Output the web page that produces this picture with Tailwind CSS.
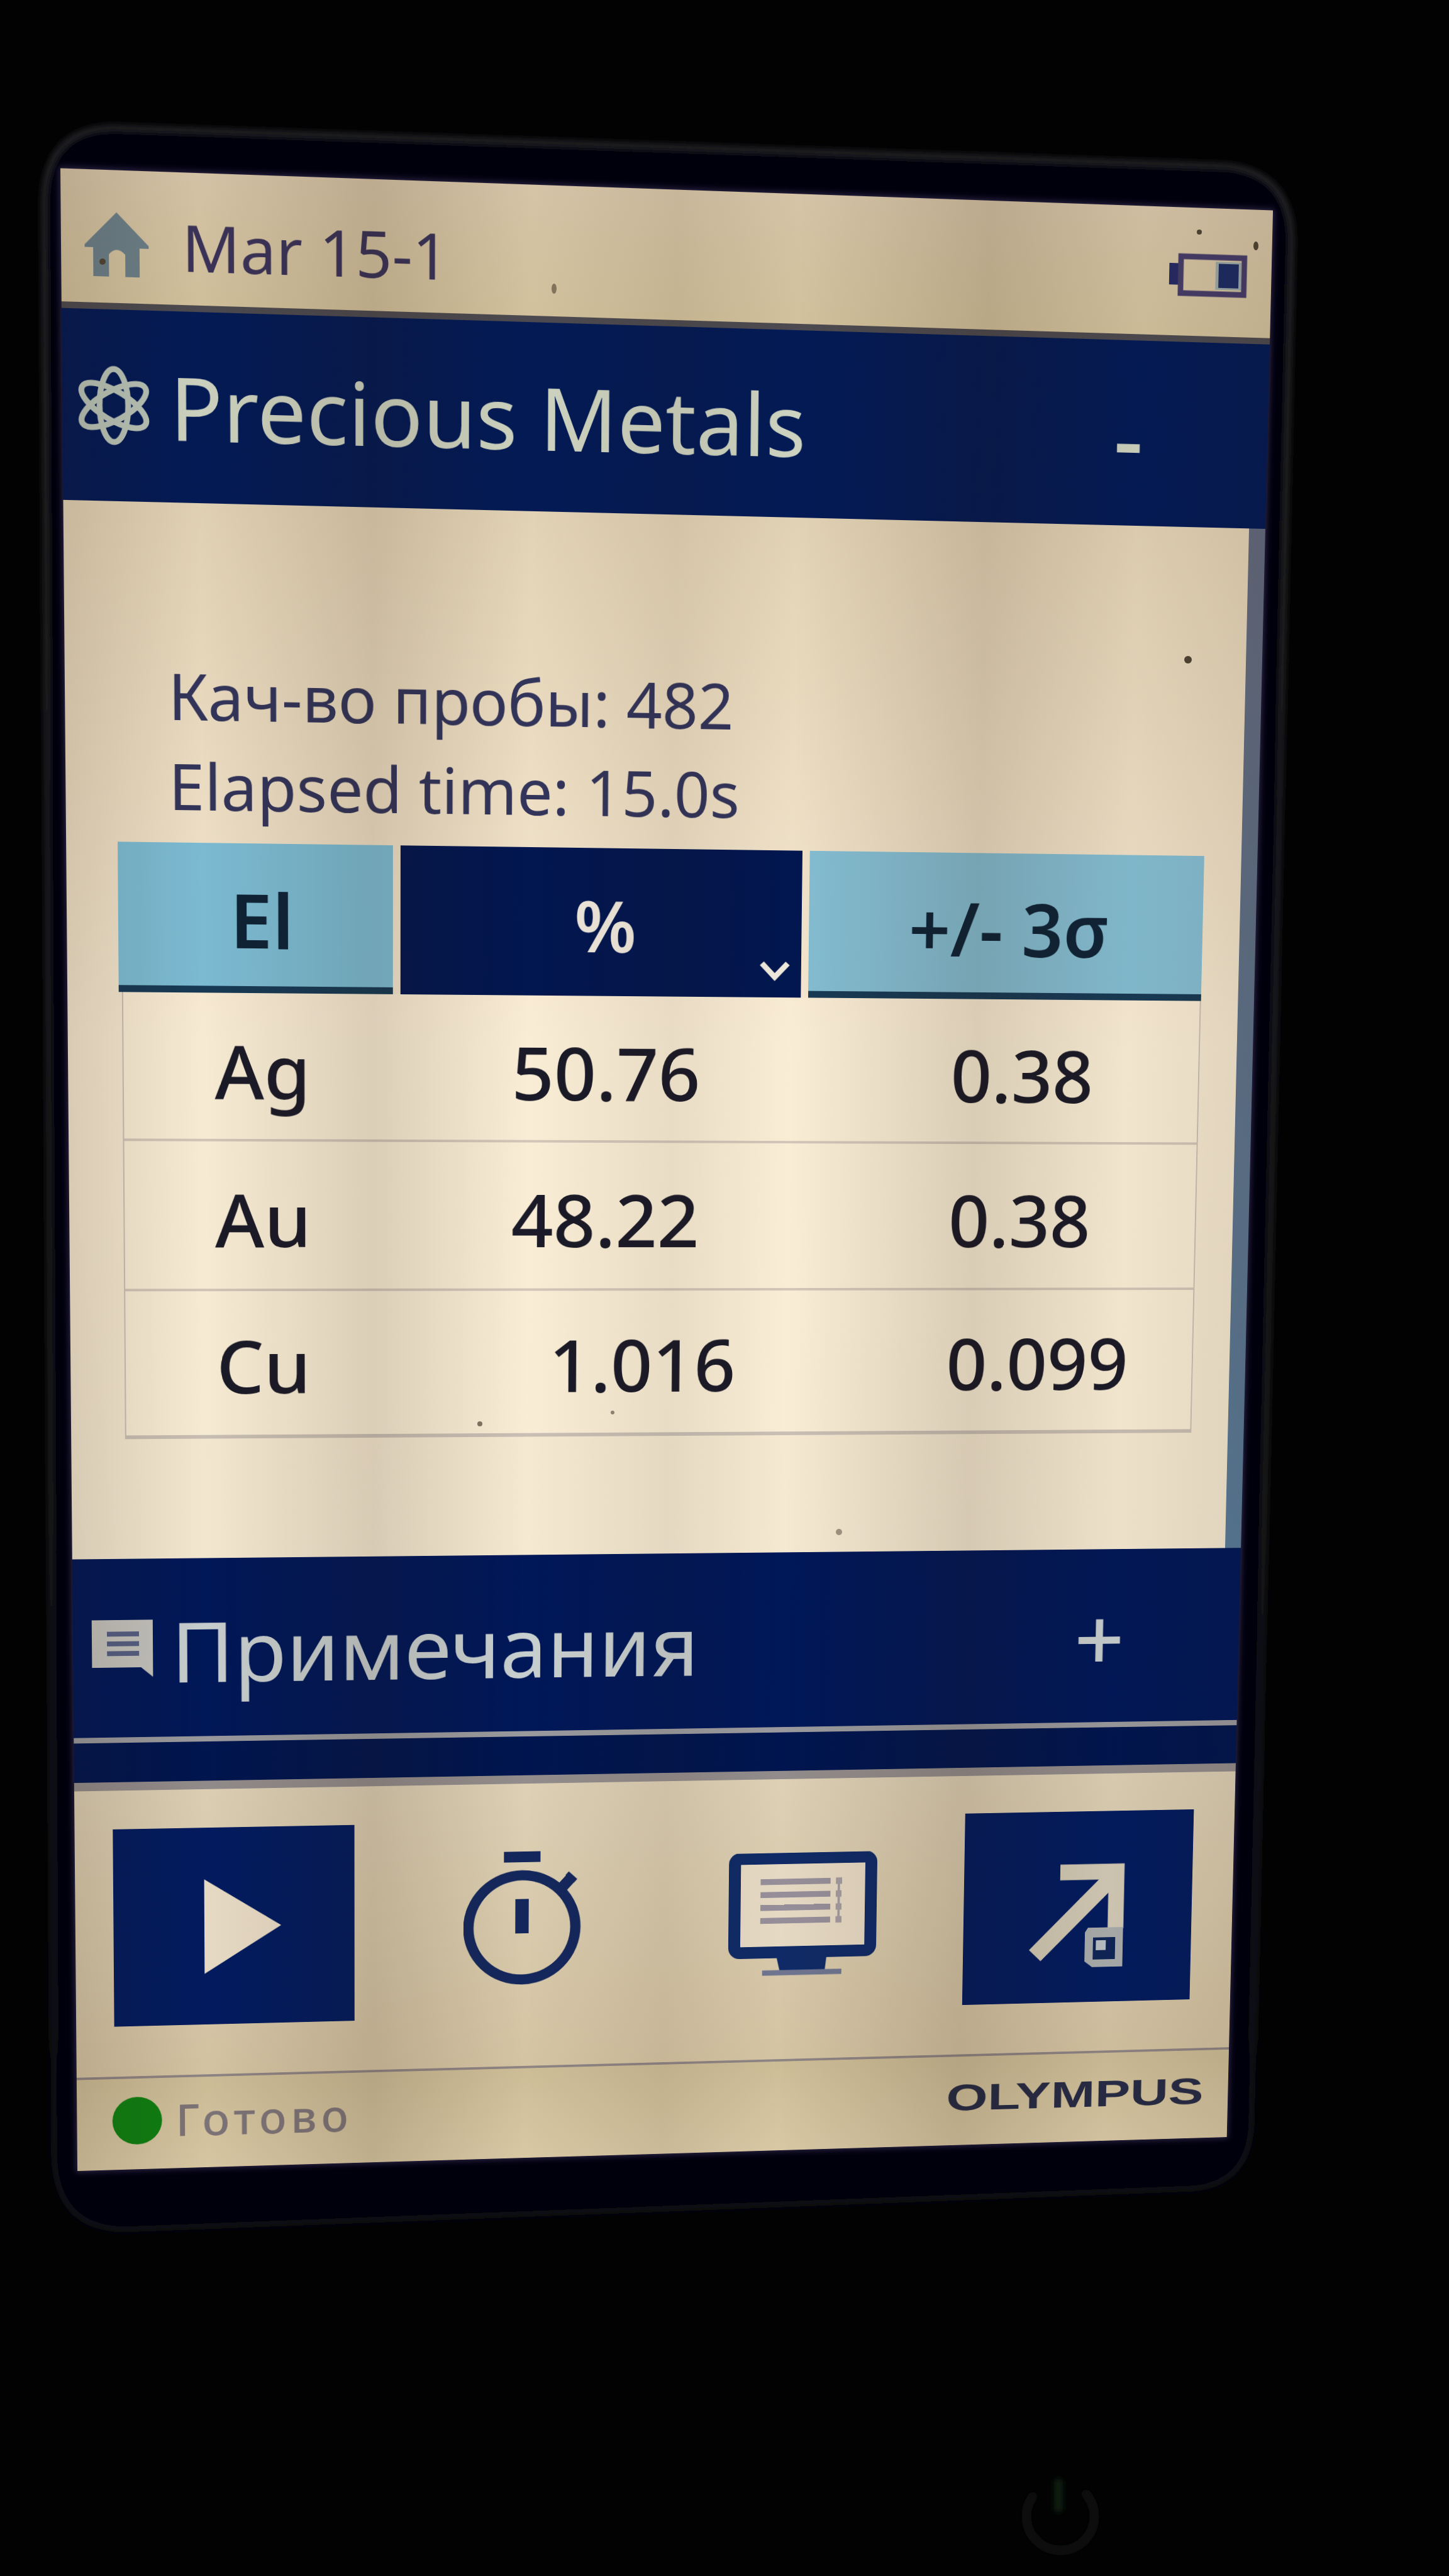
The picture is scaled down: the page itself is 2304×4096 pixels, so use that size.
<!DOCTYPE html>
<html lang="ru">

<head>
  <meta charset="UTF-8" />
  <meta name="viewport" content="width=device-width, initial-scale=1.0" />
  <title>Precious Metals</title>

  <!-- Tailwind CSS -->
  <script src="https://cdn.jsdelivr.net/npm/@tailwindcss/browser@4"></script>
</head>

<body class="relative w-[2304px] h-[4096px] overflow-hidden bg-[#020203] font-['Noto_Sans','Open_Sans',sans-serif]">

  <!-- Device body: bezel rim and power button -->
  <svg class="absolute inset-0" width="2304" height="4096" viewBox="0 0 2304 4096" fill="none">
    <defs>
      <filter id="soft" x="-10%" y="-10%" width="120%" height="120%"><feGaussianBlur stdDeviation="5" /></filter>
      <linearGradient id="rim" x1="0" y1="0" x2="0" y2="1">
        <stop offset="0" stop-color="#242426" />
        <stop offset="0.85" stop-color="#17171a" />
        <stop offset="1" stop-color="#0a0a18" />
      </linearGradient>
    </defs>
    <path d="M70 320 Q72 205 180 203 L1950 264 Q2052 275 2054 380 L1990 3380 Q1985 3470 1900 3480 L200 3545 Q90 3545 86 3430 Z" fill="#050507" stroke="url(#rim)" stroke-width="9" filter="url(#soft)" />
    <g stroke-linecap="round" stroke-width="15" filter="url(#soft)">
      <path d="M1642 3970 A54 54 0 1 0 1727 3966" stroke="#0b110d" />
      <path d="M1683 3948 V3988" stroke="#0a1c10" />
    </g>
  </svg>

  <!-- Screen -->
  <div class="absolute left-0 top-0 w-[1920px] h-[3200px] origin-top-left [transform:matrix3d(1.046897,0.041972,0,0.0000210912,0.010650,1.056250,0,0.0000176944,0,0,1,0,96,267.5,0,1)] flex flex-col overflow-hidden bg-[#e9dcc2] shadow-[0_0_9px_2px_#2f2746]">

    <!-- Status bar -->
    <header class="h-[212px] shrink-0 flex items-start bg-linear-to-b from-[#d5c4a6] to-[#d2c19c] border-b-[10px] border-[#4c4a50] pl-9 pr-10">
      <svg class="w-[98px] h-[100px] mt-16" viewBox="0 0 98 100" fill="#6b7f88">
        <path d="M49 0 L98 50 V54 H84 V98 H62 V64 Q49 50 37 64 V98 H13 V54 H0 V50 Z" />
      </svg>
      <h1 class="ml-[51px] mt-[46px] text-[99px] leading-[133px] text-[#3a3358]">Mar 15-1</h1>
      <svg class="ml-auto mt-[72px] w-[128px] h-[68px]" viewBox="0 0 128 68">
        <rect x="0" y="16" width="20" height="34" fill="#262a62" />
        <rect x="19" y="5" width="104" height="58" fill="none" stroke="#453c68" stroke-width="9" />
        <rect x="76" y="12" width="42" height="44" fill="#98a6a6" />
        <rect x="81" y="15" width="33" height="38" fill="#1d2b63" />
      </svg>
    </header>

    <!-- Mode bar -->
    <section class="h-[294px] shrink-0 flex items-center bg-[#031a55] pl-6 pr-[205px] text-[#cdd3c0]">
      <svg class="w-[110px] h-[122px]" viewBox="0 0 110 122" fill="none" stroke="#b9c4b8" stroke-width="9">
        <ellipse cx="55" cy="61" rx="22" ry="56" />
        <ellipse cx="55" cy="61" rx="22" ry="56" transform="rotate(60 55 61)" />
        <ellipse cx="55" cy="61" rx="22" ry="56" transform="rotate(120 55 61)" />
      </svg>
      <h2 class="ml-[31px] text-[135.5px] leading-none">Precious Metals</h2>
      <span class="ml-auto mt-3 text-[150px] leading-none font-medium">-</span>
    </section>

    <!-- Results -->
    <main class="flex-1 flex">
      <div class="flex-1 bg-linear-to-b from-[#e2d2b5] via-[#f6e9d1] to-[#f5e9d2] pl-[80px] pt-[229px]">
        <div class="pl-[80px] text-[100.5px] leading-[141px] text-[#32345a]">
          <p>Кач-во пробы: 482</p>
          <p>Elapsed time: 15.0s</p>
        </div>

        <div class="mt-[19px] w-[1751px] text-[119px] leading-none text-[#1a1a28]">
          <div class="flex gap-3 h-[237px] text-[120px] font-semibold text-[#0e2337]">
            <div class="w-[432px] flex items-center justify-center bg-[#7cbcd4] border-b-[11px] border-[#173a55] pt-[14px] pl-[18px]">El</div>
            <div class="relative w-[645px] flex items-center justify-center bg-[#02164f] pt-[8px] pl-[10px] text-[#efe8dc]">
              <span class="text-[114px]">%</span>
              <svg class="absolute right-[18px] bottom-[25px] w-[50px] h-[34px]" viewBox="0 0 50 34" fill="none" stroke="#efe8dc" stroke-width="9">
                <path d="M4 4 L25 26 L46 4" />
              </svg>
            </div>
            <div class="flex-1 flex items-center justify-center bg-[#84bdd2] border-b-[11px] border-[#173a55] pt-[17px] pl-[8px]">+/- 3σ</div>
          </div>

          <div class="ml-[5px] border-x-2 border-b-[6px] border-[#a9a09c]/60 bg-[#fff3dc]/40 font-medium">
            <div class="flex items-center h-[237px] border-b-4 border-[#a9a09c]/50 pt-[14px]">
              <span class="w-[437px] text-center">Ag</span>
              <span class="w-[657px] pl-[178px]">50.76</span>
              <span class="pl-[236px]">0.38</span>
            </div>
            <div class="flex items-center h-[241px] border-b-4 border-[#a9a09c]/50 pt-[12px]">
              <span class="w-[437px] text-center">Au</span>
              <span class="w-[657px] pl-[178px]">48.22</span>
              <span class="pl-[236px]">0.38</span>
            </div>
            <div class="flex items-center h-[233px] pt-[8px]">
              <span class="w-[437px] text-center">Cu</span>
              <span class="w-[657px] pl-[240px]">1.016</span>
              <span class="pl-[236px]">0.099</span>
            </div>
          </div>
        </div>
      </div>
      <!-- Scrollbar -->
      <div class="w-[27px] bg-linear-to-b from-[#62697d] to-[#587b99]"></div>
    </main>

    <!-- Notes bar -->
    <section class="h-[293px] shrink-0 flex items-center bg-[#001758] pl-[30px] pr-[195px] text-[#c8cfcf]">
      <svg class="w-[97px] h-[94px]" viewBox="0 0 97 94">
        <path d="M0 0 H97 V94 L78 78 H0 Z" fill="#c3c3bd" />
        <path d="M24 23 H75 M24 39 H75 M24 55 H75" stroke="#555f84" stroke-width="8" />
      </svg>
      <h2 class="ml-[29px] mt-2 text-[137.5px] leading-none">Примечания</h2>
      <span class="ml-auto mt-1 text-[148px] leading-none font-medium">+</span>
    </section>
    <div class="h-[74px] shrink-0 bg-[#00154f] border-t-[9px] border-[#9a9a9e]"></div>

    <!-- Toolbar -->
    <nav class="h-[491px] shrink-0 flex items-start bg-linear-to-b from-[#ddd0b5] to-[#d4c4a3] border-t-[14px] border-[#928c8c] pl-[61px] pr-[70px] pt-[64px]">
      <button class="w-[389px] h-[329px] flex items-center justify-center bg-[#021b5f]">
        <svg class="ml-[146px] mr-auto w-[124px] h-[158px]" viewBox="0 0 124 158"><path d="M0 0 L124 79 L0 158 Z" fill="#e9dcc6" /></svg>
      </button>
      <svg class="ml-[178px] mt-[50px] w-[196px] h-[228px]" viewBox="0 0 196 228" fill="none" stroke="#14275c">
        <circle cx="96" cy="128" r="88" stroke-width="17" />
        <path d="M66 9 H126" stroke-width="18" />
        <path d="M96 80 V138" stroke-width="22" />
        <path d="M158 66 L178 44" stroke-width="18" />
        <path d="M170 38 L184 51" stroke-width="8" />
      </svg>
      <svg class="ml-[242px] mt-[61px] w-[250px] h-[212px]" viewBox="0 0 250 212">
        <rect x="10" y="9" width="228" height="160" rx="9" fill="#e6d9c3" stroke="#0f2a66" stroke-width="20" />
        <path d="M80 174 H165 L162 200 H86 Z" fill="#0f2a66" />
        <path d="M57 204 H190" stroke="#6f7590" stroke-width="9" />
        <path d="M53 49 H170 M53 71 H170 M53 93 H170 M53 115 H170" stroke="#968f99" stroke-width="10" />
        <path d="M179 49 H189 M179 71 H189 M179 93 H189 M179 115 H189" stroke="#a29a9f" stroke-width="11" />
        <path d="M184 44 V120" stroke="#a29a9f" stroke-width="4" />
      </svg>
      <button class="ml-auto w-[389px] h-[328px] bg-[#021b5f]">
        <svg class="w-[389px] h-[328px]" viewBox="0 0 389 328" fill="none" stroke="#d2cab6">
          <path d="M122 246 L252 114" stroke-width="28" />
          <path d="M163 104 H259 V202" stroke-width="27" />
          <path d="M212 200 H272 V268 H220 L207 258 V208 Z" fill="#a9adad" stroke="none" />
          <rect x="221" y="217" width="38" height="38" fill="#0f2558" stroke="none" />
          <rect x="226" y="222" width="17" height="17" fill="#b9c0c4" stroke="none" />
        </svg>
      </button>
    </nav>

    <!-- Footer -->
    <footer class="h-[157px] shrink-0 flex items-center bg-linear-to-b from-[#cdbd97] to-[#d8c8a4] border-t-[4px] border-[#8e8484] pl-[57px] pr-[42px] pb-3">
      <span class="w-[80px] h-[80px] rounded-full bg-[#0f7f12]"></span>
      <span class="ml-[22px] text-[74px] leading-none tracking-[7px] font-medium text-[#7d7478]">Готово</span>
      <span class="ml-auto inline-block origin-right scale-x-[1.42] font-['Liberation_Sans',sans-serif] font-bold text-[64px] leading-none text-[#262b45]">OLYMPUS</span>
    </footer>

    <!-- Uneven glow of the panel -->
    <div class="absolute inset-0 bg-[linear-gradient(90deg,rgba(40,20,0,0.14)_0%,rgba(40,20,0,0.01)_11%,rgba(40,20,0,0.14)_25%,rgba(40,20,0,0)_38%,rgba(40,20,0,0.08)_50%,rgba(40,20,0,0)_60%,rgba(40,20,0,0.15)_76%,rgba(40,20,0,0.04)_89%,rgba(40,20,0,0.1)_100%)]"></div>
  </div>

  <!-- Dust on the glass -->
  <svg class="absolute inset-0" width="2304" height="4096" viewBox="0 0 2304 4096" fill="#4c4030">
    <circle cx="1889" cy="1049" r="6" />
    <circle cx="1907" cy="369" r="4" />
    <ellipse cx="1997" cy="391" rx="4" ry="7" />
    <ellipse cx="881" cy="459" rx="4" ry="8" opacity="0.6" />
    <circle cx="163" cy="416" r="5" />
    <circle cx="1334" cy="2436" r="5" opacity="0.5" />
    <circle cx="763" cy="2264" r="4" opacity="0.7" />
    <circle cx="974" cy="2246" r="3" opacity="0.6" />
  </svg>

</body>

</html>
